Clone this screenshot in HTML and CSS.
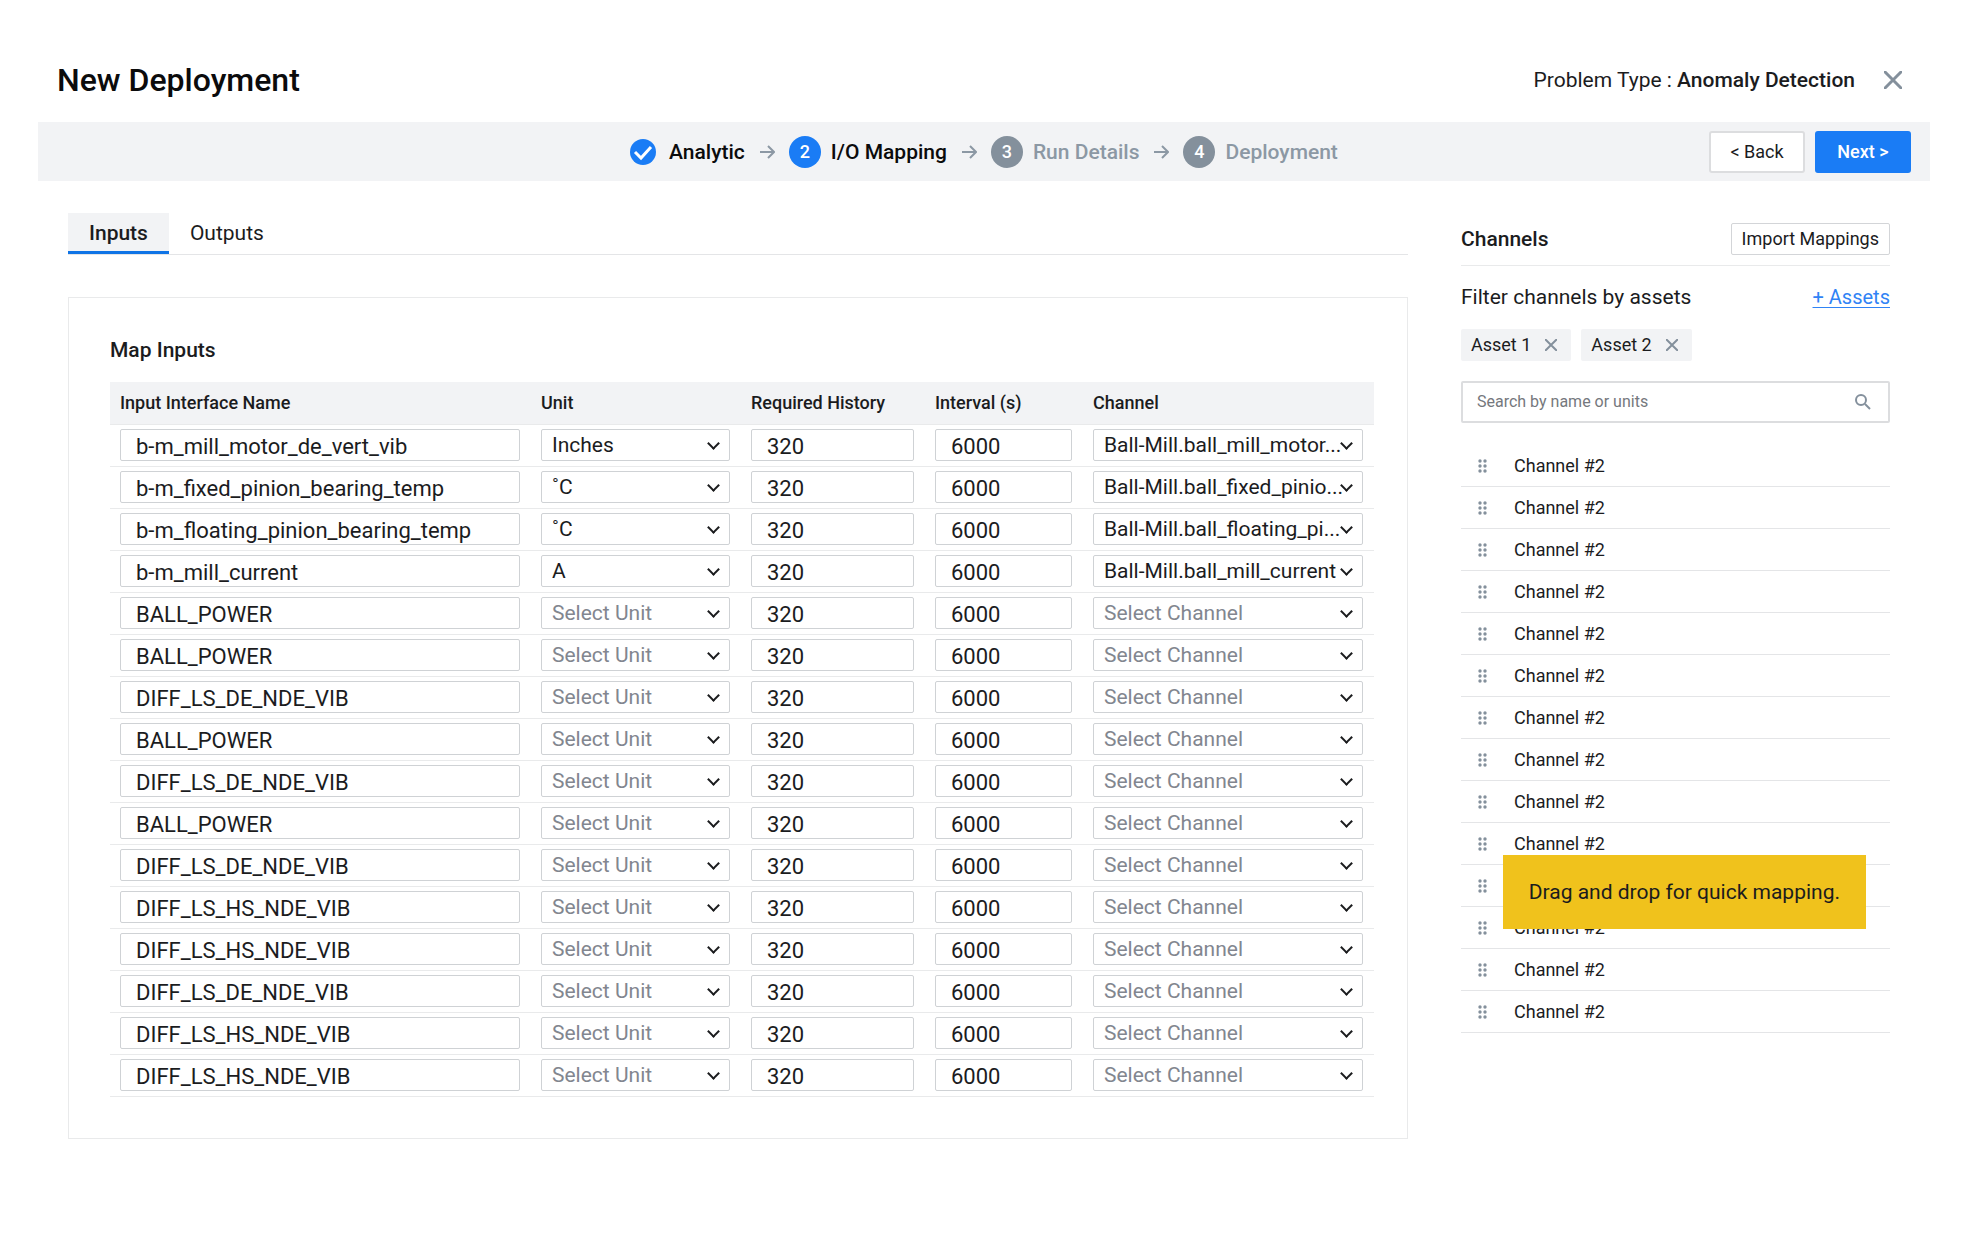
FILE: index.html
```html
<!DOCTYPE html>
<html lang="en">
  <head>
    <meta charset="UTF-8" />
    <meta name="viewport" content="width=device-width, initial-scale=1.0" />
    <title>New Deployment</title>
    <link rel="stylesheet" href="styles.css">
  </head>
  <body>
    <header class="page-header">
      <h1>New Deployment</h1>
      <p class="problem-type">Problem Type : <strong>Anomaly Detection</strong></p>
      <button class="icon-button" type="button" aria-label="Close">
        <svg class="close" width="18" height="18" viewBox="0 0 18 18"><path d="M0 0l18 18M18 0L0 18" /></svg>
      </button>
    </header>

    <nav class="stepper">
      <ol class="steps">
        <li class="step active">
          <svg class="check" width="26" height="26" viewBox="0 0 26 26">
            <circle cx="13" cy="13" r="13" />
            <path d="M5 13l6 6L21 8" />
          </svg>
          Analytic
        </li>
        <li class="step active">
          <svg class="arrow" width="15" height="14" viewBox="0 0 15 14"><path d="M0 7h14M8 1l6 6-6 6" /></svg>
          <span class="number">2</span>I/O Mapping
        </li>
        <li class="step">
          <svg class="arrow" width="15" height="14" viewBox="0 0 15 14"><path d="M0 7h14M8 1l6 6-6 6" /></svg>
          <span class="number">3</span>Run Details
        </li>
        <li class="step">
          <svg class="arrow" width="15" height="14" viewBox="0 0 15 14"><path d="M0 7h14M8 1l6 6-6 6" /></svg>
          <span class="number">4</span>Deployment
        </li>
      </ol>
      <div class="actions">
        <button class="button" type="button">&lt; Back</button>
        <button class="button primary" type="button">Next &gt;</button>
      </div>
    </nav>

    <main>
      <section class="mapping">
        <div class="tabs" role="tablist">
          <button class="tab selected" type="button" role="tab" aria-selected="true">Inputs</button>
          <button class="tab" type="button" role="tab" aria-selected="false">Outputs</button>
        </div>
        <div class="panel">
          <h2>Map Inputs</h2>
          <table>
            <thead>
              <tr>
                <th class="col-name">Input Interface Name</th>
                <th class="col-unit">Unit</th>
                <th class="col-history">Required History</th>
                <th class="col-interval">Interval (s)</th>
                <th class="col-channel">Channel</th>
              </tr>
            </thead>
            <tbody id="inputs"></tbody>
          </table>
        </div>
      </section>

      <aside class="channels">
        <div class="channels-header">
          <h2>Channels</h2>
          <button class="import" type="button">Import Mappings</button>
        </div>
        <div class="filter">
          <span>Filter channels by assets</span>
          <a href="#">+ Assets</a>
        </div>
        <div class="chips">
          <span class="chip">Asset 1
            <button class="icon-button" type="button" aria-label="Remove Asset 1">
              <svg width="12" height="12" viewBox="0 0 12 12"><path d="M0 0l12 12M12 0L0 12" /></svg>
            </button>
          </span>
          <span class="chip">Asset 2
            <button class="icon-button" type="button" aria-label="Remove Asset 2">
              <svg width="12" height="12" viewBox="0 0 12 12"><path d="M0 0l12 12M12 0L0 12" /></svg>
            </button>
          </span>
        </div>
        <div class="search">
          <input type="search" placeholder="Search by name or units" aria-label="Search by name or units" />
          <svg width="16" height="16" viewBox="0 0 16 16">
            <circle cx="6" cy="6" r="5" />
            <path d="M10 10l5 5" />
          </svg>
        </div>
        <div class="channel-list">
          <ul id="channels"></ul>
          <div class="tooltip" role="tooltip">Drag and drop for quick mapping.</div>
        </div>
      </aside>
    </main>
    <script src="script.js"></script>
  </body>
</html>
```
FILE: styles.css
```css
* {
  box-sizing: border-box;
}
body {
  font-family: Roboto, "Liberation Sans", sans-serif;
  font-size: 21px;
  line-height: 24px;
  color: #1b1c1e;
  margin: 0;
  padding: 38px;
  background-color: #fff;
}
button,
input,
select {
  font: inherit;
  color: inherit;
}
button {
  cursor: pointer;
}
h1,
h2,
p,
ul,
ol {
  margin: 0;
  padding: 0;
}
ul,
ol {
  list-style: none;
}

.page-header {
  display: flex;
  align-items: center;
  height: 84px;
  padding: 0 28px 0 19px;
}
h1 {
  font-size: 32px;
  font-weight: 500;
  line-height: 36px;
  color: #0b0b0c;
  margin-right: auto;
}
.problem-type {
  margin-right: 29px;
}
.problem-type strong {
  font-weight: 500;
}
.icon-button {
  display: flex;
  padding: 0;
  border: 0;
  background: none;
}
.icon-button svg {
  fill: none;
  stroke: #84909c;
  stroke-width: 2;
}
.icon-button .close {
  stroke-width: 3;
}

.stepper {
  display: grid;
  grid-template-columns: 1fr auto 1fr;
  align-items: center;
  height: 59px;
  padding: 0 19px;
  background-color: #f2f3f5;
}
.steps {
  grid-column: 2;
  display: flex;
  align-items: center;
}
.step {
  display: flex;
  align-items: center;
  font-weight: 500;
  color: #8c98a4;
}
.step.active {
  color: #0b0b0c;
}
.arrow {
  margin: 0 14px 0 15px;
  fill: none;
  stroke: #8c98a4;
  stroke-width: 2;
}
.check {
  margin-right: 13px;
  fill: #1a7cf5;
}
.check path {
  fill: none;
  stroke: #fff;
  stroke-width: 3;
}
.number {
  display: flex;
  align-items: center;
  justify-content: center;
  width: 32px;
  height: 32px;
  margin-right: 10px;
  border-radius: 50%;
  background-color: #84909c;
  color: #fff;
  font-size: 18px;
}
.active .number {
  background-color: #1a7cf5;
}
.actions {
  justify-self: end;
  display: flex;
  gap: 10px;
}
.button {
  width: 96px;
  height: 42px;
  padding: 0;
  border: 2px solid #dcdddf;
  border-radius: 3px;
  background-color: #fff;
  font-size: 18px;
}
.button.primary {
  border-color: #1a7cf5;
  background-color: #1a7cf5;
  color: #fff;
  font-weight: 500;
}

main {
  display: flex;
  gap: 53px;
  padding: 32px 40px 0 30px;
}
.mapping {
  flex: 1;
  min-width: 0;
}
.tabs {
  display: flex;
  height: 42px;
  border-bottom: 1px solid #e4e5e7;
}
.tab {
  padding: 2px 21px 0;
  border: 0;
  border-bottom: 3px solid transparent;
  background: none;
}
.tab.selected {
  border-bottom-color: #0f74e6;
  background-color: #f2f3f5;
  font-weight: 500;
}
.panel {
  margin-top: 42px;
  padding: 40px 33px 41px 41px;
  border: 1px solid #e9eaeb;
}
h2 {
  font-size: 21px;
  font-weight: 500;
  line-height: 24px;
}
table {
  width: 100%;
  margin-top: 20px;
  border-collapse: collapse;
  table-layout: fixed;
}
th {
  height: 42px;
  padding: 0 10px;
  background-color: #f2f3f5;
  font-size: 18px;
  font-weight: 500;
  text-align: left;
}
td {
  height: 42px;
  padding: 0 11px 0 10px;
}
tr {
  border-bottom: 1px solid #e9eaeb;
}
.col-name {
  width: 421px;
}
.col-unit {
  width: 210px;
}
.col-history {
  width: 184px;
}
.col-interval {
  width: 158px;
}
td input,
td select {
  display: block;
  width: 100%;
  height: 32px;
  border: 1px solid #cfd2d5;
  border-radius: 2px;
  background-color: #fff;
}
td input {
  padding: 2px 15px 0;
  font-size: 22px;
}
td select {
  appearance: none;
  padding: 0 16px 1px 10px;
}
.select {
  position: relative;
}
.select.empty select {
  color: #82868f;
}
.select::after {
  content: "";
  position: absolute;
  top: 10px;
  right: 12px;
  width: 7px;
  height: 7px;
  border: solid #1b1c1e;
  border-width: 0 2px 2px 0;
  transform: rotate(45deg);
  pointer-events: none;
}

.channels {
  width: 429px;
}
.channels-header {
  display: flex;
  align-items: center;
  justify-content: space-between;
  height: 53px;
  border-bottom: 1px solid #e9eaeb;
}
.import {
  height: 32px;
  padding: 0 10px;
  border: 1px solid #d3d5d8;
  border-radius: 2px;
  background-color: #fff;
  font-size: 18px;
}
.filter {
  display: flex;
  justify-content: space-between;
  margin-top: 19px;
}
.filter a {
  color: #3083f5;
  font-size: 20px;
  text-underline-offset: 3px;
  text-decoration-thickness: 1px;
}
.chips {
  display: flex;
  gap: 10px;
  margin-top: 20px;
}
.chip {
  display: flex;
  align-items: center;
  gap: 14px;
  height: 32px;
  padding: 0 14px 0 10px;
  border-radius: 2px;
  background-color: #f2f3f5;
  font-size: 18px;
}
.search {
  display: flex;
  align-items: center;
  height: 42px;
  margin-top: 20px;
  padding: 0 17px 0 14px;
  border: 2px solid #dcdddf;
  border-radius: 2px;
}
.search input {
  flex: 1;
  min-width: 0;
  padding: 0;
  border: 0;
  background: none;
  font-size: 16px;
}
.search input::placeholder {
  color: #75787d;
  opacity: 1;
}
.search svg {
  fill: none;
  stroke: #84909c;
  stroke-width: 2;
}
.channel-list {
  position: relative;
  margin-top: 22px;
}
.channel-list li {
  display: flex;
  align-items: center;
  gap: 27px;
  height: 42px;
  padding-left: 17px;
  border-bottom: 1px solid #e4e5e7;
  font-size: 18px;
}
.channel-list svg {
  fill: #84909c;
}
.tooltip {
  position: absolute;
  right: 24px;
  bottom: 104px;
  padding: 25px 26px;
  background-color: #f0c21c;
}
```
FILE: script.js
```js
const inputs = [
  ["b-m_mill_motor_de_vert_vib", "Inches", "Ball-Mill.ball_mill_motor..."],
  ["b-m_fixed_pinion_bearing_temp", "˚C", "Ball-Mill.ball_fixed_pinio..."],
  ["b-m_floating_pinion_bearing_temp", "˚C", "Ball-Mill.ball_floating_pi..."],
  ["b-m_mill_current", "A", "Ball-Mill.ball_mill_current"],
  ["BALL_POWER"],
  ["BALL_POWER"],
  ["DIFF_LS_DE_NDE_VIB"],
  ["BALL_POWER"],
  ["DIFF_LS_DE_NDE_VIB"],
  ["BALL_POWER"],
  ["DIFF_LS_DE_NDE_VIB"],
  ["DIFF_LS_HS_NDE_VIB"],
  ["DIFF_LS_HS_NDE_VIB"],
  ["DIFF_LS_DE_NDE_VIB"],
  ["DIFF_LS_HS_NDE_VIB"],
  ["DIFF_LS_HS_NDE_VIB"],
];

function select(label, value) {
  return `<div class="select ${value ? "" : "empty"}">
    <select aria-label="${label}"><option>${value || "Select " + label}</option></select>
  </div>`;
}

document.getElementById("inputs").innerHTML = inputs
  .map(
    ([name, unit, channel]) => `<tr>
      <td><input type="text" aria-label="Input Interface Name" value="${name}" /></td>
      <td>${select("Unit", unit)}</td>
      <td><input type="text" aria-label="Required History" value="320" /></td>
      <td><input type="text" aria-label="Interval" value="6000" /></td>
      <td>${select("Channel", channel)}</td>
    </tr>`
  )
  .join("");

const handle = `<svg width="9" height="14" viewBox="0 0 9 14">
  <circle cx="2" cy="2" r="1.7" /><circle cx="7" cy="2" r="1.7" />
  <circle cx="2" cy="7" r="1.7" /><circle cx="7" cy="7" r="1.7" />
  <circle cx="2" cy="12" r="1.7" /><circle cx="7" cy="12" r="1.7" />
</svg>`;

document.getElementById("channels").innerHTML = `<li draggable="true">${handle}Channel #2</li>`.repeat(14);
```
